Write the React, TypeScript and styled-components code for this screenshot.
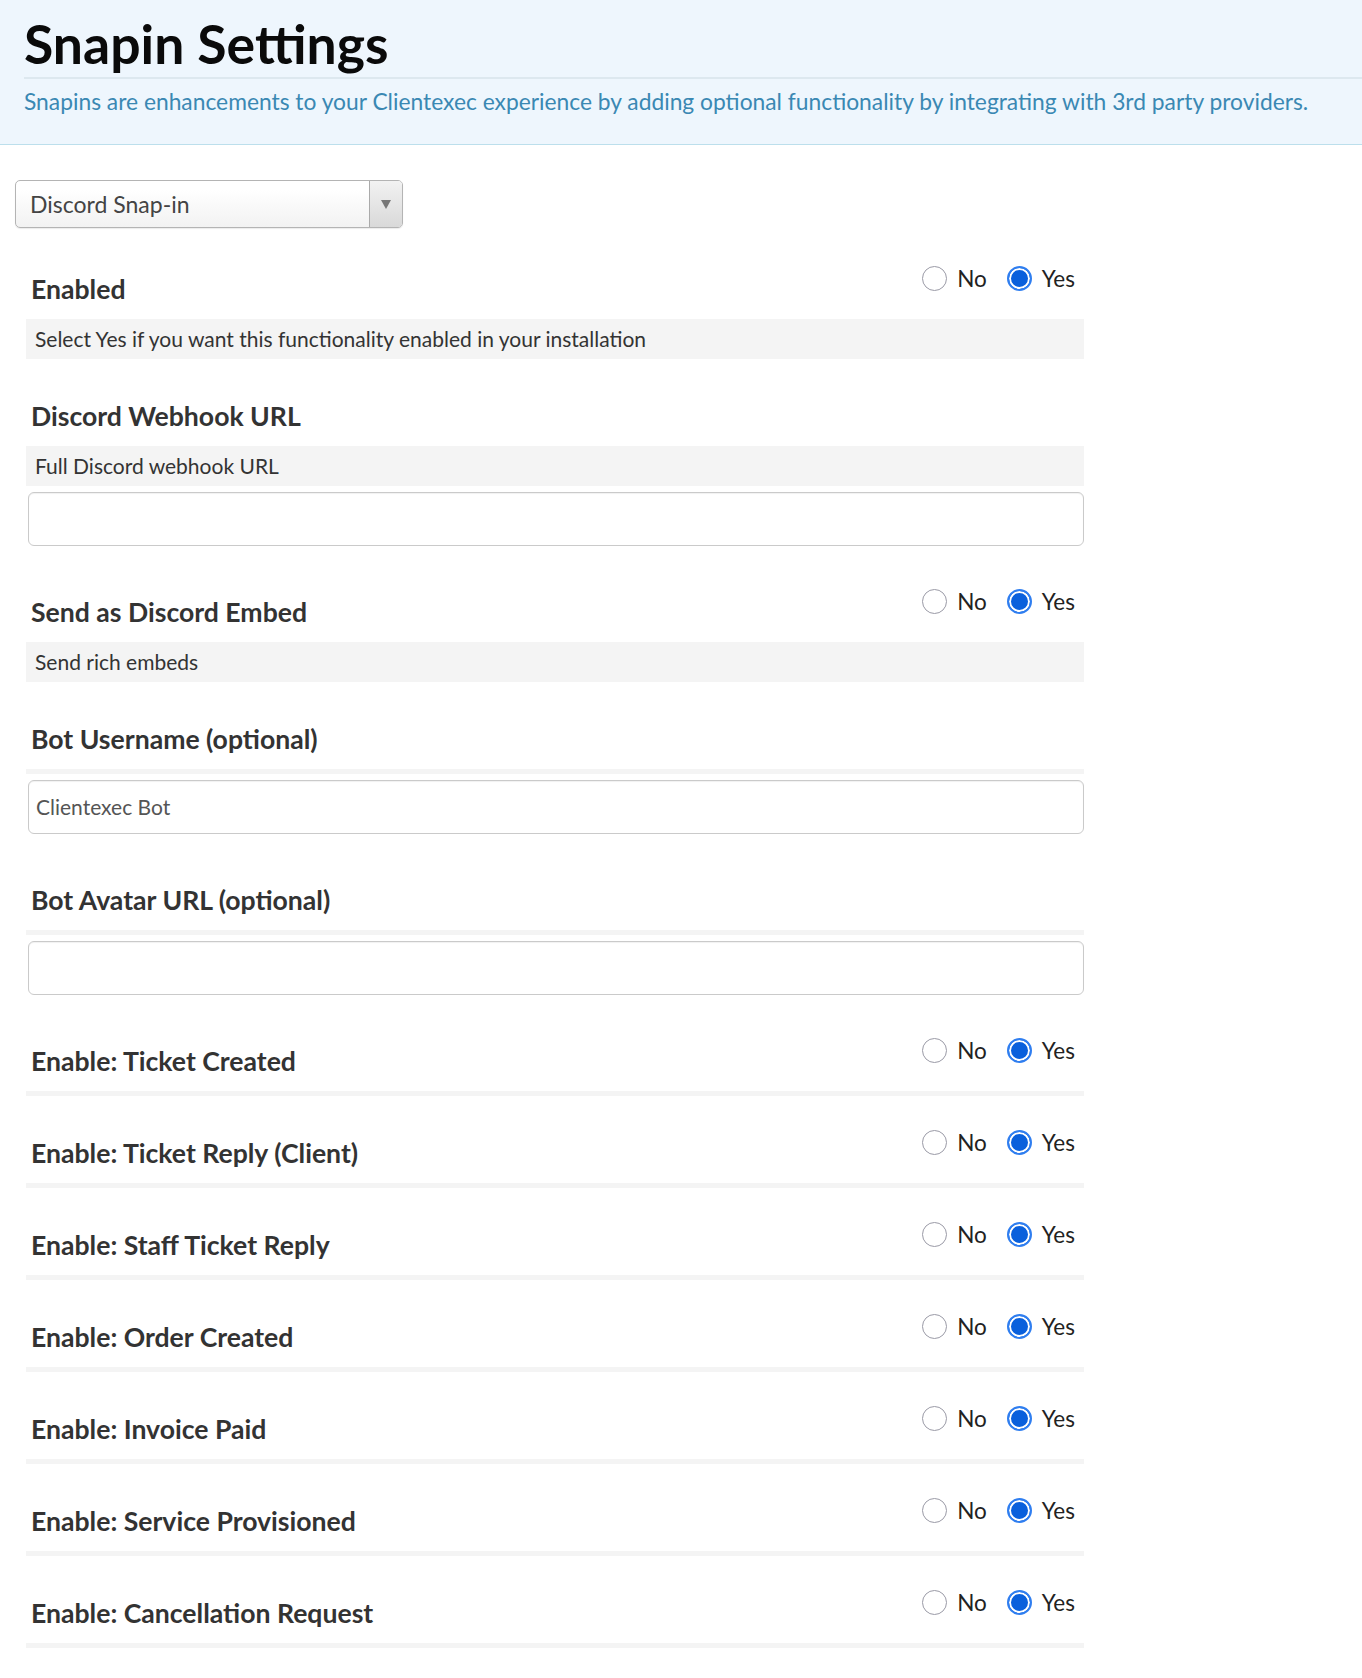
import React from "react";
import styled, { createGlobalStyle } from "styled-components";

const GlobalStyle = createGlobalStyle`
  html, body {
    margin: 0;
    padding: 0;
    background: #fff;
    font-family: Lato, "Open Sans", "Liberation Sans", sans-serif;
  }
`;

const PageHeader = styled.header`
  background: #eef6fd;
  border-bottom: 1px solid #bcdfec;
  padding: 0 0 27px 24px;
`;

const Title = styled.h1`
  margin: 0;
  padding: 16px 0 7px;
  font-size: 53.5px;
  line-height: 54px;
  font-weight: 700;
  color: #0a0a0a;
  border-bottom: 2px solid #dde8ef;
`;

const Subtitle = styled.p`
  margin: 7px 0 0 0;
  padding-bottom: 1px;
  font-size: 22.8px;
  line-height: 30px;
  color: #3a88b3;
`;

const Main = styled.main`
  padding: 35px 15px 30px;
`;

const Select = styled.div`
  display: flex;
  width: 388px;
  height: 48px;
  box-sizing: border-box;
  border: 1px solid #b4b4b4;
  border-radius: 5px;
  overflow: hidden;
  background: linear-gradient(#fff 20%, #f9f9f9 55%, #f2f2f2 100%);
  box-shadow: 0 1px 1px rgba(0, 0, 0, 0.08);
`;

const SelectValue = styled.span`
  flex: 1;
  padding-left: 14px;
  font-size: 23px;
  line-height: 46px;
  color: #444;
`;

const SelectArrow = styled.span`
  width: 32px;
  display: flex;
  align-items: center;
  justify-content: center;
  border-left: 1px solid #aaa;
  background: linear-gradient(#f2f2f2, #d9d9d9);

  &::after {
    content: "";
    border-left: 5px solid transparent;
    border-right: 5px solid transparent;
    border-top: 9px solid #777;
  }
`;

const Form = styled.div`
  width: 1058px;
  margin: 38px 0 0 11px;
  display: flex;
  flex-direction: column;
  gap: 34px;
`;

const Row = styled.section``;

const RowHeader = styled.div`
  display: flex;
  justify-content: space-between;
  align-items: flex-start;
  padding-bottom: 15px;
`;

const Label = styled.label`
  padding: 8px 0 0 5px;
  font-size: 26.6px;
  line-height: 30px;
  font-weight: 700;
  color: #333;
`;

const RadioGroup = styled.div`
  display: flex;
  align-items: center;
  margin-right: 9px;
`;

const RadioOption = styled.span<{ $first?: boolean }>`
  display: flex;
  align-items: center;
  gap: 10px;
  margin-left: ${(p) => (p.$first ? 0 : 20)}px;
  font-size: 22.5px;
  line-height: 25px;
  color: #222;
`;

const RadioDot = styled.span<{ $checked?: boolean }>`
  width: 25px;
  height: 25px;
  box-sizing: border-box;
  border-radius: 50%;
  border: ${(p) => (p.$checked ? "2px solid #2f7ef0" : "1px solid #9a9aa6")};
  background: ${(p) => (p.$checked ? "#0a60dc" : "#fff")};
  box-shadow: ${(p) => (p.$checked ? "inset 0 0 0 2px #fff" : "none")};
`;

const Description = styled.div<{ $empty?: boolean }>`
  background: #f4f4f4;
  padding: 0 9px;
  height: ${(p) => (p.$empty ? 5 : 40)}px;
  font-size: 21px;
  line-height: 40px;
  color: #333;
`;

const TextInput = styled.div`
  margin: 6px 0 9px 2px;
  height: 54px;
  box-sizing: border-box;
  border: 1px solid #cacaca;
  border-radius: 6px;
  box-shadow: inset 0 1px 1px rgba(0, 0, 0, 0.06);
  padding: 0 7px;
  font-size: 21px;
  line-height: 52px;
  color: #555;
`;

type Setting = {
  label: string;
  kind: "radio" | "text";
  desc?: string;
  value?: string;
};

const settings: Setting[] = [
  {
    label: "Enabled",
    kind: "radio",
    desc: "Select Yes if you want this functionality enabled in your installation",
  },
  { label: "Discord Webhook URL", kind: "text", desc: "Full Discord webhook URL", value: "" },
  { label: "Send as Discord Embed", kind: "radio", desc: "Send rich embeds" },
  { label: "Bot Username (optional)", kind: "text", value: "Clientexec Bot" },
  { label: "Bot Avatar URL (optional)", kind: "text", value: "" },
  { label: "Enable: Ticket Created", kind: "radio" },
  { label: "Enable: Ticket Reply (Client)", kind: "radio" },
  { label: "Enable: Staff Ticket Reply", kind: "radio" },
  { label: "Enable: Order Created", kind: "radio" },
  { label: "Enable: Invoice Paid", kind: "radio" },
  { label: "Enable: Service Provisioned", kind: "radio" },
  { label: "Enable: Cancellation Request", kind: "radio" },
];

const YesNo = () => (
  <RadioGroup>
    <RadioOption $first>
      <RadioDot />
      No
    </RadioOption>
    <RadioOption>
      <RadioDot $checked />
      Yes
    </RadioOption>
  </RadioGroup>
);

export default function App() {
  return (
    <>
      <GlobalStyle />
      <PageHeader>
        <Title>Snapin Settings</Title>
        <Subtitle>
          Snapins are enhancements to your Clientexec experience by adding optional
          functionality by integrating with 3rd party providers.
        </Subtitle>
      </PageHeader>
      <Main>
        <Select>
          <SelectValue>Discord Snap-in</SelectValue>
          <SelectArrow />
        </Select>
        <Form>
          {settings.map((s) => (
            <Row key={s.label}>
              <RowHeader>
                <Label>{s.label}</Label>
                {s.kind === "radio" && <YesNo />}
              </RowHeader>
              <Description $empty={!s.desc}>{s.desc}</Description>
              {s.kind === "text" && <TextInput>{s.value}</TextInput>}
            </Row>
          ))}
        </Form>
      </Main>
    </>
  );
}
